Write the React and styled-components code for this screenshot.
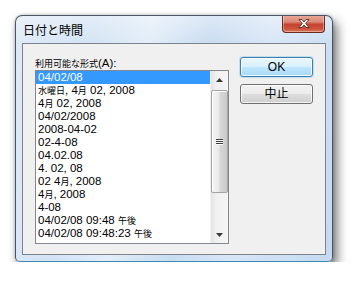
import React from "react";
import styled, { createGlobalStyle } from "styled-components";

const GlobalStyle = createGlobalStyle`
  html, body { margin: 0; padding: 0; background: #ffffff; }
  body { font-family: "Liberation Sans", "Noto Sans CJK JP", sans-serif; }
`;

const Page = styled.div`
  padding: 15px 0 0 15px;
`;

const Window = styled.div`
  box-sizing: border-box;
  width: 318px;
  height: 247px;
  display: flex;
  flex-direction: column;
  border: 1px solid #4a5561;
  border-bottom-color: #3f86b8;
  border-radius: 7px 7px 5px 5px;
  background:
    linear-gradient(180deg, rgba(255,255,255,0.35) 0px, rgba(255,255,255,0) 28px),
    linear-gradient(100deg, #dfeaf7 0%, #d3e3f4 22%, #e2edf8 38%, #c9dcf1 55%, #d8e6f6 72%, #c4d9f0 100%);
  box-shadow: 4px 6px 11px rgba(0, 0, 0, 0.55), 0 0 3px rgba(0,0,0,0.25);
  overflow: hidden;
`;

const TitleBar = styled.div`
  height: 27px;
  display: flex;
  align-items: center;
  justify-content: space-between;
  padding-left: 7px;
`;

const Title = styled.span`
  font-family: "Noto Sans CJK JP", sans-serif;
  font-size: 12px;
  color: #000;
  line-height: 14px;
  margin-top: 1px;
`;

const CloseButton = styled.div`
  align-self: flex-start;
  margin-top: -1px;
  margin-right: 7px;
  width: 43px;
  height: 18px;
  box-sizing: border-box;
  border: 1px solid #6b2a20;
  border-top: none;
  border-radius: 0 0 4px 4px;
  background: linear-gradient(180deg, #e9a99a 0%, #dc8a78 40%, #c4442f 55%, #c9523c 80%, #dc7a5c 100%);
  box-shadow: inset 0 0 0 1px rgba(255,255,255,0.35);
  display: flex;
  align-items: center;
  justify-content: center;
`;

const Client = styled.div`
  flex: 1;
  margin: 0 6px 6px;
  border: 1px solid #7b838d;
  background: #f0f0f0;
  display: flex;
  align-items: flex-start;
  gap: 11px;
  padding: 13px 0 0 12px;
`;

const LeftColumn = styled.div`
  display: flex;
  flex-direction: column;
`;

const Label = styled.div`
  font-size: 11.5px;
  line-height: 13px;
  height: 13px;
  color: #000;
  white-space: nowrap;
`;

const ListBox = styled.div`
  box-sizing: border-box;
  width: 194px;
  height: 174px;
  border: 1px solid #828790;
  background: #fff;
  display: flex;
`;

const Items = styled.div`
  flex: 1;
  display: flex;
  flex-direction: column;
`;

const Item = styled.div`
  height: 13px;
  line-height: 13px;
  font-size: 11.5px;
  padding-left: 2px;
  white-space: nowrap;
  color: ${(p) => (p.$selected ? "#fff" : "#000")};
  background: ${(p) => (p.$selected ? "#3399ff" : "transparent")};
`;

const Cjk = styled.span`
  font-family: "Noto Sans CJK JP", sans-serif;
  font-size: 9px;
`;

const ScrollBar = styled.div`
  width: 17px;
  display: flex;
  flex-direction: column;
  background: linear-gradient(90deg, #e3e3e3 0%, #f0f0f0 30%, #f5f5f5 100%);
  border-left: 1px solid #f0f0f0;
`;

const Arrow = styled.div`
  height: 17px;
  display: flex;
  align-items: center;
  justify-content: center;
`;

const Track = styled.div`
  flex: 1;
  display: flex;
  flex-direction: column;
  padding-top: 2px;
`;

const Thumb = styled.div`
  box-sizing: border-box;
  height: 103px;
  border: 1px solid #a3a3a3;
  border-radius: 2px;
  background: linear-gradient(90deg, #f6f6f6 0%, #eaeaea 45%, #d6d6d6 55%, #cbcbcb 100%);
  box-shadow: inset 1px 1px 0 #ffffff;
  display: flex;
  align-items: center;
  justify-content: center;
`;

const Gripper = styled.div`
  width: 7px;
  display: flex;
  flex-direction: column;
  gap: 1px;
`;

const GripLine = styled.div`
  height: 1px;
  background: #3d3d3d;
  box-shadow: 0 1px 0 #ffffff;
`;

const ButtonColumn = styled.div`
  display: flex;
  flex-direction: column;
  gap: 7px;
`;

const Button = styled.div`
  box-sizing: border-box;
  width: 73px;
  height: 20px;
  border: 1px solid ${(p) => (p.$default ? "#3c7fb1" : "#707070")};
  border-radius: 3px;
  background: ${(p) =>
    p.$default
      ? "linear-gradient(180deg, #eaf6fd 0%, #d9f0fc 50%, #bee6fd 51%, #a7d9f5 100%)"
      : "linear-gradient(180deg, #f2f2f2 0%, #ebebeb 50%, #dddddd 51%, #cfcfcf 100%)"};
  box-shadow: ${(p) =>
    p.$default
      ? "inset 0 0 0 1px rgba(255,255,255,0.8), 0 0 0 1px rgba(110,190,235,0.35)"
      : "inset 0 0 0 1px rgba(255,255,255,0.75)"};
  display: flex;
  align-items: center;
  justify-content: center;
  font-size: 12px;
  line-height: 14px;
  color: #000;
`;

const items = [
  "04/02/08",
  "水曜日, 4月 02, 2008",
  "4月 02, 2008",
  "04/02/2008",
  "2008-04-02",
  "02-4-08",
  "04.02.08",
  "4. 02, 08",
  "02 4月, 2008",
  "4月, 2008",
  "4-08",
  "04/02/08 09:48 午後",
  "04/02/08 09:48:23 午後",
];

function renderText(text) {
  const parts = text.split(/([\u3000-\u9fff]+)/);
  return parts.map((part, i) =>
    /[\u3000-\u9fff]/.test(part) ? <Cjk key={i}>{part}</Cjk> : part
  );
}

const UpArrow = () => (
  <svg width="7" height="4" viewBox="0 0 7 4">
    <path d="M3.5 0 L7 4 L0 4 Z" fill="#3a3a3a" />
  </svg>
);

const DownArrow = () => (
  <svg width="7" height="4" viewBox="0 0 7 4">
    <path d="M0 0 L7 0 L3.5 4 Z" fill="#3a3a3a" />
  </svg>
);

const CloseGlyph = () => (
  <svg width="14" height="11" viewBox="0 0 14 11">
    <path
      d="M2 1.5 L5 1.5 L7 4 L9 1.5 L12 1.5 L8.6 5.5 L12 9.5 L9 9.5 L7 7 L5 9.5 L2 9.5 L5.4 5.5 Z"
      fill="#ffffff"
      stroke="#5a2a22"
      strokeWidth="0.9"
      strokeLinejoin="round"
    />
  </svg>
);

export default function App() {
  return (
    <>
      <GlobalStyle />
      <Page>
        <Window>
          <TitleBar>
            <Title>日付と時間</Title>
            <CloseButton>
              <CloseGlyph />
            </CloseButton>
          </TitleBar>
          <Client>
            <LeftColumn>
              <Label>{renderText("利用可能な形式(A):")}</Label>
              <ListBox>
                <Items>
                  {items.map((t, i) => (
                    <Item key={i} $selected={i === 0}>
                      {renderText(t)}
                    </Item>
                  ))}
                </Items>
                <ScrollBar>
                  <Arrow>
                    <UpArrow />
                  </Arrow>
                  <Track>
                    <Thumb>
                      <Gripper>
                        <GripLine />
                        <GripLine />
                        <GripLine />
                      </Gripper>
                    </Thumb>
                  </Track>
                  <Arrow>
                    <DownArrow />
                  </Arrow>
                </ScrollBar>
              </ListBox>
            </LeftColumn>
            <ButtonColumn>
              <Button $default>OK</Button>
              <Button>中止</Button>
            </ButtonColumn>
          </Client>
        </Window>
      </Page>
    </>
  );
}
